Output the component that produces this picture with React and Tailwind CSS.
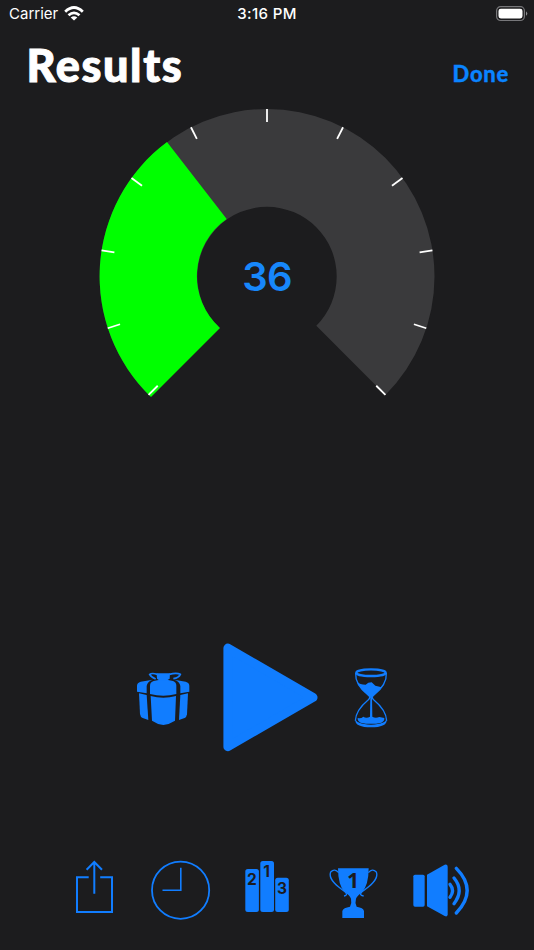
import React from 'react';

const CENTER = 170;
const OUTER = 167.5;
const INNER = 69.7;

// angles are in degrees, clockwise, with 0 at the top
const point = (angle, radius) => {
  const a = (angle * Math.PI) / 180;
  return [CENTER + radius * Math.sin(a), CENTER + 0.5 - radius * Math.cos(a)];
};

const ring = (from, to) => {
  const large = to - from > 180 ? 1 : 0;
  return `M${point(from, OUTER)} A${OUTER} ${OUTER} 0 ${large} 1 ${point(to, OUTER)} L${point(to, INNER)} A${INNER} ${INNER} 0 ${large} 0 ${point(from, INNER)} Z`;
};

const Gauge = ({ value }) => {
  const ticks = Array.from({ length: 11 }, (_, i) => -135 + i * 27);
  return (
    <div className="relative mx-auto h-[300px] w-[340px]">
      <svg className="block" width="340" height="300" viewBox="0 0 340 300">
        <path d={ring(-135, 135)} fill="#3a3a3c" />
        <path d="M54 291 A167.5 167.5 0 0 1 70 36 L129.7 113 A69.7 69.7 0 0 0 123 222Z" fill="#00ff00" />
        {ticks.map((t) => {
          const [x1, y1] = point(t, 167.5);
          const [x2, y2] = point(t, 154.5);
          return <line key={t} x1={x1} y1={y1} x2={x2} y2={y2} stroke="#fff" strokeWidth="1.8" />;
        })}
      </svg>
      <div className="absolute inset-x-0 top-[147px] text-center font-['Inter',sans-serif] text-[40px] leading-[48px] font-semibold tracking-[-0.8px] text-[#1787fb]">
        {value}
      </div>
    </div>
  );
};

const WifiIcon = () => (
  <svg width="20" height="16" viewBox="0 0 20 16" fill="#fff">
    <path d="M10 14.6 L6.7 11.6 Q10 9 13.3 11.6Z" />
    <path d="M4.5 9.3 Q10 4.5 15.5 9.3" fill="none" stroke="#fff" strokeWidth="2.8" />
    <path d="M1.2 5.7 Q10 -2.7 18.8 5.7" fill="none" stroke="#fff" strokeWidth="2.8" />
  </svg>
);

const BatteryIcon = () => (
  <svg width="32" height="16" viewBox="0 0 32 16">
    <rect x="0.6" y="0.7" width="27.8" height="13.8" rx="4" fill="none" stroke="#77777a" strokeWidth="1.2" />
    <rect x="2.5" y="2.7" width="24" height="9.7" rx="2.3" fill="#fff" />
    <path d="M30 5.2 Q32.6 7.5 30 9.8Z" fill="#8e8e91" />
  </svg>
);

const GiftIcon = () => (
  <svg width="70" height="75" viewBox="0 0 210 225" fill="currentColor">
    <path d="M21 95 V77 Q21 68 32 65 L68 59 Q52 64 50 78 V100Z" />
    <path d="M60 102 V77 Q60 66 71 63 Q100 56 129 63 Q139 66 139 77 V102 Q100 113 60 102Z" />
    <path d="M151 100 V78 Q149 64 133 59 L167 65 Q178 68 178 77 V95Z" />
    <path d="M27 100 L50 105 L55 180 L38 174 Q31 171 30 162Z" />
    <path d="M62 108 Q100 119 138 108 L135 182 Q120 192 100 195 Q80 192 66 182Z" />
    <path d="M151 105 L174 100 L171 163 Q170 171 164 174 L147 180Z" />
    <path d="M80 40 H120 L119 56 L109 62 H89 L81 56Z" />
    <path d="M82 43 Q66 38 59 43 Q63 51 77 57 M118 43 Q140 37 151 43 Q147 53 130 56" fill="none" stroke="currentColor" strokeWidth="5" />
  </svg>
);

const PlayIcon = () => (
  <svg width="96" height="109" viewBox="0 0 96 109">
    <path d="M4.9 5.1 L90 54.4 L4.9 103.7Z" fill="currentColor" stroke="currentColor" strokeWidth="9" strokeLinejoin="round" />
  </svg>
);

const HourglassIcon = () => (
  <svg width="55" height="75" viewBox="0 0 165 225" fill="currentColor">
    <ellipse cx="78" cy="38" rx="44" ry="10" fill="none" stroke="currentColor" strokeWidth="7" />
    <path d="M32 39 C30 68 50 90 70 106 Q78 112 70 119 C46 139 32 159 31 182 M124 39 C126 68 106 90 86 106 Q78 112 86 119 C110 139 124 159 125 182" fill="none" stroke="currentColor" strokeWidth="4" />
    <path d="M35 65 Q45 74 62 74 Q69 67 80 67 L91 77 L110 82 Q98 95 86 106 L81 114 H76 L70 106 Q47 88 35 65Z" />
    <path d="M76 109 H81 L82 170 Q91 176 103 171 L118 174 Q119 184 109 188 Q78 195 47 188 Q37 183 38 174 Q48 176 55 170 Q64 176 75 170Z" />
    <path d="M31 174 Q32 193 78 194 Q124 193 125 174 V182 Q124 201 78 202 Q32 201 31 182Z" />
  </svg>
);

const ShareIcon = () => (
  <svg width="40" height="56" viewBox="0 0 40 56" fill="none" stroke="currentColor" strokeWidth="2">
    <path d="M14.7 18.3 H3 V53 H38 V18.3 H26.2" />
    <path d="M20.3 34.7 V3 M12.6 10.8 L20.3 3 L28 10.8" />
  </svg>
);

const ClockIcon = () => (
  <svg width="60" height="60" viewBox="0 0 60 60" fill="none" stroke="currentColor" strokeWidth="1.8">
    <circle cx="29.6" cy="30.2" r="28.6" />
    <path d="M29.8 7.7 V30.2 H11.5" strokeWidth="1.6" />
  </svg>
);

const PodiumIcon = () => (
  <svg width="44" height="53" viewBox="0 0 44 53" fill="currentColor">
    <rect x="0.3" y="9" width="13.6" height="43" rx="2.5" />
    <rect x="15.3" y="1" width="13.7" height="51" rx="2.5" />
    <rect x="30.2" y="17.8" width="13.6" height="34.2" rx="2.5" />
    <g fill="#1c1c1e" fontFamily="Inter, sans-serif" fontWeight="700" fontSize="15.5" textAnchor="middle">
      <text x="7" y="25">2</text>
      <text x="21.6" y="17">1</text>
      <text x="37" y="34">3</text>
    </g>
  </svg>
);

const TrophyIcon = () => (
  <svg width="50" height="61" viewBox="0 -30 150 183" fill="currentColor">
    <path d="M27 4 H119 Q119 54 99 76 Q84 87 81 95 Q77 108 83 119 Q103 122 105 132 V153 H40 V132 Q43 122 63 119 Q69 108 66 95 Q62 85 47 76 Q27 54 27 4Z" />
    <path d="M29 17 Q17 3 5 15 C-4 38 29 61 48 74 Q58 85 45 87 M118 17 Q130 3 142 15 C151 38 118 61 99 74 Q88 85 104 87" fill="none" stroke="currentColor" strokeWidth="4" />
    <text x="72" y="64" fill="#1c1c1e" fontFamily="Noto Sans, sans-serif" fontWeight="700" fontSize="64" textAnchor="middle">1</text>
  </svg>
);

const SpeakerIcon = () => (
  <svg width="57" height="53" viewBox="0 0 171 159" fill="currentColor">
    <rect x="1" y="32" width="34" height="96" rx="5" />
    <path d="M42 32 L95 2 Q104 0 104 8 V151 Q104 160 95 156 L42 127Z" />
    <g fill="none" stroke="currentColor" strokeWidth="10" strokeLinecap="round">
      <path d="M111 61 Q126 79 111 100" />
      <path d="M123 42 Q154 79 123 119" />
      <path d="M130 13 Q195 79 130 147" />
    </g>
  </svg>
);

export default function App() {
  return (
    <div className="flex h-[950px] w-[534px] flex-col overflow-hidden bg-[#1c1c1e] font-['Inter',sans-serif] text-[#117dff]">
      <div className="grid h-7 grid-cols-3 items-center text-white">
        <div className="flex items-center gap-[6px] pl-[9px]">
          <span className="text-[15px] leading-5">Carrier</span>
          <WifiIcon />
        </div>
        <span className="text-center text-[15px] leading-5 font-medium tracking-[0.4px]">3:16 PM</span>
        <div className="flex justify-end pr-[6.5px]">
          <BatteryIcon />
        </div>
      </div>

      <header className="flex h-[78px] items-baseline justify-between pt-[10px] pr-[25px] pl-[26.5px] font-['Lato',sans-serif]">
        <h1 className="text-[45px] leading-[54px] font-black tracking-[1.6px] text-white [-webkit-text-stroke:1px_white]">Results</h1>
        <button className="text-[22px] leading-7 font-black tracking-[0.7px] text-[#0a84ff] [-webkit-text-stroke:0.3px_#0a84ff]">Done</button>
      </header>

      <Gauge value={36} />

      <div className="mt-[237px] flex h-[108px] items-start pl-[130px]">
        <button className="mt-[17px]"><GiftIcon /></button>
        <button className="ml-[23px]"><PlayIcon /></button>
        <button className="mt-[17px] ml-[26px]"><HourglassIcon /></button>
      </div>

      <div className="mt-[109px] flex items-start pl-[74px]">
        <button className="-mt-px"><ShareIcon /></button>
        <button className="ml-[37px]"><ClockIcon /></button>
        <button className="ml-[34px]"><PodiumIcon /></button>
        <button className="-mt-[3px] ml-[39.5px]"><TrophyIcon /></button>
        <button className="mt-[4px] ml-[34.5px]"><SpeakerIcon /></button>
      </div>
    </div>
  );
}
